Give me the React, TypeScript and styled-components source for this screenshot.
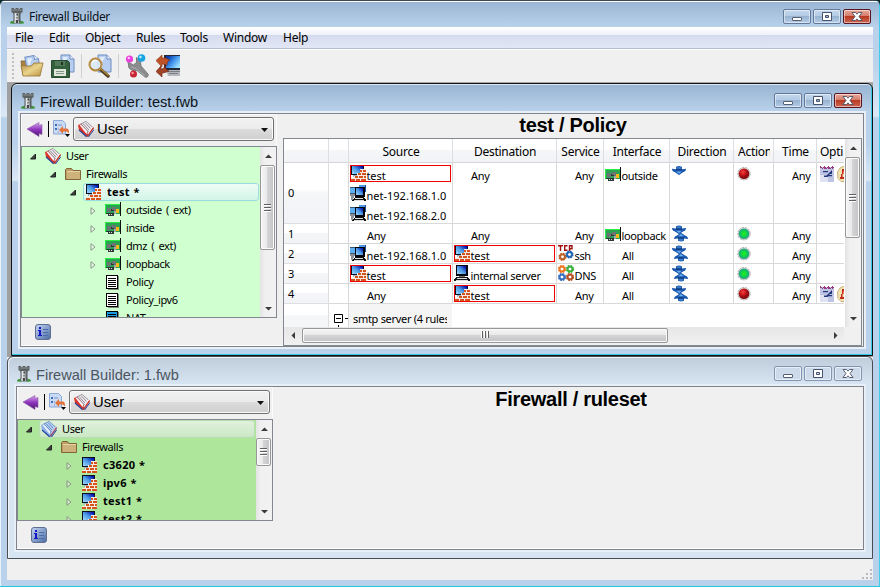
import React from "react";
import styled, { createGlobalStyle, css } from "styled-components";

const ui = '"Noto Sans", "Open Sans", sans-serif';
const arial = '"Liberation Sans", Arial, sans-serif';

const Global = createGlobalStyle`
  * { box-sizing: border-box; }
  html, body { margin: 0; padding: 0; overflow: hidden; background: #0d2c2e; }
  svg { display: block; flex: none; }
`;

/* ---------- icons ---------- */

const Svg = ({ w = 16, h = w, vb = `0 0 ${w} ${h}`, crisp = false, children }: {
  w?: number; h?: number; vb?: string; crisp?: boolean; children: React.ReactNode;
}) => <svg width={w} height={h} viewBox={vb} shapeRendering={crisp ? "crispEdges" : undefined}>{children}</svg>;

const Tower = () => (
  <Svg w={14} h={16}>
    <path d="M1.500 0h2.500v1h1.500V0h3v1H10V0h2.500v4.500h-1L10.500 6v6l1.500 3.500H2L3.500 12V6l-1-1.500h-1z" fill="#5b6063" />
    <path d="M2.500 1.500h9v1h-9z" fill="#8e9395" />
    <path d="M4.500 5h4v7l.5 3H3.500l1-3z" fill="#c3c7c8" /><path d="M5 5h1.500v7H5z" fill="#e6e8e8" />
    <path d="M6.500 5.500h1.500v2H6.500zM6.500 9h1v1.500h-1z" fill="#3c4042" />
    <path d="M6 12h2v3H6z" fill="#44484a" />
    <path d="M0 15.500c0-3.500 4-3.500 4.500 0zM9.500 15.500c.5-3.500 4.500-3.500 4.500 0z" fill="#3a9334" />
  </Svg>
);

const Doc = () => (
  <g>
    <path d="M2 1h9l4 4v13H2z" fill="#b7cef0" stroke="#6f8dc0" />
    <path d="M11 1v4h4" fill="#f2f7ff" stroke="#6f8dc0" />
    <path d="M4 3h5L4 12z" fill="#e3edfb" />
  </g>
);

const OpenIcon = () => (
  <Svg w={24}>
    <defs><linearGradient id="fol" x2="1" y2="1"><stop stopColor="#b08a42" /><stop offset=".5" stopColor="#ead48c" /><stop offset="1" stopColor="#b8903f" /></linearGradient></defs>
    <path d="M1 7h6l2 2h5v12H3z" fill="#a98140" stroke="#8f6e35" />
    <g transform="translate(4 1) rotate(-10 8 8)"><Doc /></g>
    <path d="M1 11l2 11h17l3-13h-9l-3 3H6z" fill="url(#fol)" stroke="#977532" strokeWidth=".8" />
  </Svg>
);
const SaveIcon = () => (
  <Svg w={24}>
    <g transform="translate(8 0)"><Doc /></g>
    <path d="M.5 6.500h16l2 2v15H.5z" fill="#35603e" stroke="#284b31" />
    <path d="M4 7h10v5H4z" fill="#53785a" /><path d="M10 8h2v3h-2z" fill="#1c3421" />
    <path d="M3 15h12v7H3z" fill="#dfe6dc" /><path d="M5 17.500h8M5 19.500h8" stroke="#869a86" />
  </Svg>
);
const FindIcon = () => (
  <Svg w={24}>
    <g transform="translate(8 0)"><Doc /></g>
    <path d="M12 15l8 7" stroke="#554022" strokeWidth="3.500" strokeLinecap="round" />
    <path d="M12.500 14.500l8 7" stroke="#b28a3f" strokeWidth="1.200" />
    <circle cx="7.500" cy="10.500" r="6" fill="#dce9f7" fillOpacity=".9" stroke="#a67a32" strokeWidth="1.800" />
    <circle cx="7.500" cy="10.500" r="6.600" fill="none" stroke="#d9b56b" strokeWidth=".7" />
    <path d="M4 9c1-3 4-3 5-2" stroke="#fff" fill="none" strokeWidth="1.300" />
  </Svg>
);
const WrenchIcon = () => (
  <Svg w={24}>
    <path d="M3 8l1 6 4 3 4-.5 8 6.500c2 1 4-1 3-3l-7-8-.5-5-4-3.500 0 5-3 2.500z" fill="#8a8c8d" stroke="#7a7c7e" />
    <path d="M6 13l4 1 10 8" stroke="#b5b7b8" fill="none" strokeWidth=".8" />
    <circle cx="4.500" cy="5" r="3.600" fill="#e93ddd" /><circle cx="3.800" cy="4" r="1.200" fill="#ffc8fb" />
    <circle cx="16.500" cy="4" r="3.800" fill="#18a4e3" /><circle cx="15.500" cy="3" r="1.300" fill="#b6edff" />
    <circle cx="8.500" cy="20" r="3.500" fill="#c62634" /><circle cx="7.600" cy="19" r="1.200" fill="#ff9aa0" />
  </Svg>
);
const InstallIcon = () => (
  <Svg w={24}>
    <defs><linearGradient id="lap" x2="1" y2=".7"><stop offset=".15" stopColor="#0a3cae" /><stop offset=".55" stopColor="#3f92ea" /><stop offset="1" stopColor="#9fe2ff" /></linearGradient></defs>
    <path d="M8 1h16v15H8z" fill="#20283a" /><path d="M10 2h14v12H10z" fill="url(#lap)" />
    <path d="M10 16h14v6H12z" fill="#b4b8bd" /><path d="M12 17.500h12M13 19.500h9" stroke="#7a7f85" />
    <path d="M0 6.500L6 1v3h3c2 0 3 2 5 2-2 1-3 2-3 5-2 0-3-1-5-1v3z" fill="#bd5226" stroke="#8a3416" strokeWidth=".6" />
    <path d="M0 17.500L5 12v3c2 0 3-1 4-3 1 2 1 4 4 5-3 1-4 2-7 2v4z" fill="#a14325" stroke="#6a2111" strokeWidth=".6" />
  </Svg>
);
const BackIcon = () => (
  <Svg w={16} h={15}>
    <defs><linearGradient id="bk" x2="0" y2="1"><stop stopColor="#d9a5ef" /><stop offset=".5" stopColor="#8f35bd" /><stop offset="1" stopColor="#4b1471" /></linearGradient></defs>
    <path d="M0 7L12 .5v3l3-1v10l-3-1v3z" fill="url(#bk)" stroke="#8c5da8" strokeWidth=".6" />
  </Svg>
);
const NewObjIcon = () => (
  <Svg w={18}>
    <path d="M.5 .5h9l3 3V14H.5z" fill="#c8daf5" stroke="#8ba8d6" />
    <path d="M2 4h2v2H2zM2 8h2v2H2z" fill="#3f6ab4" /><path d="M5 5h4M5 9h1M5 12h1" stroke="#7a93bd" />
    <path d="M6 10l4-4v2.500h3c3 0 3 2 3 5-2-2.500-3-2-6-2v2.500z" fill="#e2733a" />
    <path d="M12 14h5l-2.500 3z" fill="#000" />
  </Svg>
);
const Book = ({ blue = false }: { blue?: boolean }) => (
  <Svg w={16}>
    <path d="M2 3l6-3 8 7-6 9-2 0-7-7z" fill={blue ? "#4b74b4" : "#7d7684"} />
    <path d="M3.500 3L8 .5 15 7l-4.500 3.500z" fill={blue ? "#bdd6f8" : "#eeeaee"} />
    <path d="M5 2.500l6 6.500M7 1.500l5.500 6" stroke={blue ? "#5e86bf" : "#968c95"} />
    <path d="M0 4l3-1 6.500 8v5L1 9z" fill={blue ? "#8fb1e6" : "#d8342a"} />
    <path d="M1.500 4L3 3.500l6.500 7-1 2.500z" fill={blue ? "#eaf2fd" : "#fdf6f8"} />
    <path d="M1 9l7.500 6.500" fill="none" stroke="#2c49a0" strokeWidth="1.200" />
    <path d="M10 13l5-7" stroke={blue ? "#ddd0e4" : "#fff"} strokeWidth="1.500" />
    <path d="M9.500 15l6-8.500" stroke={blue ? "#a0506b" : "#cf3226"} strokeWidth="1.300" />
    <path d="M10.500 16L16 8.500" stroke="#2c49a0" strokeWidth="1" />
  </Svg>
);
const Folder = () => (
  <Svg w={16}>
    <path d="M.5 13.500v-10l1-1h5l1.500 2h7.500v9z" fill="#bd9c62" stroke="#826639" />
    <path d="M2 6h13v7H2z" fill="#cdb27c" /><path d="M2 5.500h13" stroke="#e6d3a6" />
  </Svg>
);
const Screen = ({ id }: { id: string }) => (
  <defs><linearGradient id={id} x1="0" y1="1" x2="1" y2="0"><stop stopColor="#9fd9ff" /><stop offset=".5" stopColor="#4a98e4" /><stop offset=".9" stopColor="#0715b0" /></linearGradient></defs>
);
const Fw = () => (
  <Svg w={16} crisp>
    <Screen id="scr" />
    <path d="M1 0h13v10H1z" fill="#0a1020" /><path d="M2 1h11v8H2z" fill="url(#scr)" />
    <path d="M3 10h5v2H3z" fill="#9fb2bd" />
    <path d="M10 4h6v12H1v-3h3v-2h3V8h3z" fill="#f6ebe4" />
    <path d="M10 5h2v2h-2zM13 5h3v2h-3zM8 8h3v2H8zM12 8h4v2h-4zM5 11h3v2H5zM9 11h4v2H9zM14 11h2v2h-2zM1 14h4v2H1zM6 14h4v2H6zM11 14h5v2h-5z" fill="#d4541c" />
  </Svg>
);
const Nic = () => (
  <Svg w={16} crisp>
    <path d="M0 2h15v10H0z" fill="#2aa252" /><path d="M0 2h15v1H1v9H0z" fill="#29ed41" />
    <path d="M2 6h4v4H2zM7 5h4v4H7z" fill="#6c7475" /><path d="M3 9h6V8H7V7H6v2zM1 11h8v1H1z" fill="#293735" />
    <path d="M3 12h6v2H3z" fill="#323a38" /><path d="M4 12h1v1H4zM6 12h1v1H6z" fill="#d1d8d3" />
    <path d="M11 7h3v4h-3z" fill="#f7ba16" /><path d="M9 9h2v3H9z" fill="#a4a6a5" />
    <path d="M15 0h1v14h-1z" fill="#111" />
  </Svg>
);
const Host = () => (
  <Svg w={16} crisp>
    <Screen id="scr2" />
    <path d="M2 0h12v11H2z" fill="#02040c" /><path d="M3 1h9v8H3z" fill="url(#scr2)" />
    <path d="M5 11h6v1H5z" fill="#777" /><path d="M2 12h12l2 3v1H0v-1z" fill="#14171c" />
    <path d="M3 13h10v1H3zM2 15h12v1H2z" fill="#e0e0de" />
  </Svg>
);
const Net = () => (
  <Svg w={16} crisp>
    <Screen id="scr3" />
    <path d="M9 0h7v7H9z" fill="#1d4f9c" /><path d="M9 0h6v5H9z" fill="#4b9be6" />
    <path d="M0 2h7v8H0z" fill="#3d566f" /><path d="M0 3h6v5H0z" fill="#5fb0ee" />
    <path d="M0 9h5v2H4v2H3v2H1v-3z" fill="#8b9298" />
    <path d="M5 2h10v10H5z" fill="#02040c" /><path d="M6 3h7v7H6z" fill="url(#scr3)" />
    <path d="M5 12h9l2 3v1H2v-1z" fill="#111" /><path d="M5 13h8v1H5zM4 15h10v1H4z" fill="#e0e0de" />
  </Svg>
);
const Rules = ({ nat = false }: { nat?: boolean }) => (
  <Svg w={14} h={15} crisp>
    <path d="M2 1h11v14H2z" fill="#7d8d7b" />
    <path d="M0 0h12v14H0z" fill="#000" /><path d="M1 1h10v12H1z" fill={nat ? "#1b9ce0" : "#fff"} />
    <path d="M2 3h8v1H2zM2 5h8v1H2zM2 7h8v1H2zM2 9h8v1H2zM2 11h8v1H2z" fill="#000" />
  </Svg>
);
const Info = () => (
  <Svg w={16}>
    <defs><linearGradient id="inf" x2="1" y2="1"><stop stopColor="#c5d6f2" /><stop offset="1" stopColor="#4a69a3" /></linearGradient></defs>
    <rect x=".5" y=".5" width="15" height="15" rx="2.500" fill="url(#inf)" stroke="#5e6f91" />
    <path d="M4 3h2v2H4zM3 6h3v5h1v1H3v-1h1V7H3z" fill="#1515c5" />
    <path d="M8 5.500h5M8 8.500h5M8 11.500h5" stroke="#4b6cab" />
  </Svg>
);
const ArrowDown = () => (
  <g>
    <path d="M4 1.200Q7-.4 10 1.200V3.500L14 3q0 2.500-3 3.500L7 9.300 3 6.500Q0 5.500 0 3l4 .5z" fill="#1a58ae" />
    <path d="M4.800 1.500Q7 .7 9.200 1.500V3H4.800z" fill="#3e7bc9" />
    <path d="M4 3.300q3 .8 6 0v1.100q-3 .8-6 0z" fill="#123a7a" />
    <path d="M4.300 5.800h5.400L7 8z" fill="#6fb0f4" />
  </g>
);
const Dir = ({ both = false }: { both?: boolean }) => (
  <Svg w={16} h={17}>
    <g transform={both ? undefined : "translate(0 .7)"}><ArrowDown /></g>
    {both && <g transform="translate(2 17) scale(1 -1)"><ArrowDown /></g>}
  </Svg>
);
const Light = ({ ok }: { ok: boolean }) => (
  <Svg w={14} h={15}>
    <defs>
      <radialGradient id="lg"><stop stopColor="#20ef24" /><stop offset=".45" stopColor="#12da3c" /><stop offset="1" stopColor="#1aa290" /></radialGradient>
      <radialGradient id="lr" cx=".4" cy=".35"><stop stopColor="#f04444" /><stop offset=".5" stopColor="#cf1a1e" /><stop offset="1" stopColor="#8a0a0e" /></radialGradient>
    </defs>
    <circle cx="7" cy="7.700" r="6.300" fill="#d9d4d2" stroke="#a5a5a5" strokeWidth=".8" strokeDasharray="2 1" />
    <circle cx="7" cy="7.700" r="5.300" fill={ok ? "url(#lg)" : "url(#lr)"} />
  </Svg>
);
const LogIcon = () => (
  <Svg w={14} h={16}>
    <path d="M0 1h14v15H0z" fill="#bfc4e4" /><path d="M0 9h8v7H0z" fill="#dfe2f2" />
    <path d="M0 0h1v1h1v1h1V1h1V0h1v1h1v1h1V1h1V0h1v1h1v1h1V1h1V0h1v1h1v1h-1v1h-1V2h-1v1H8V2H7v1H4V2H3v1H2V2H0z" fill="#9a3a80" />
    <path d="M3 5h5v1.300H3zM4 9.500h2.500L12 4v4h-2l-1 1h3v1.300H8.500L7.500 11H4z" fill="#23387d" />
  </Svg>
);
const OptIcon = () => (
  <Svg w={8} h={16}>
    <path d="M3 2l3-1.500h2V15.500H4l-3-3L.5 6z" fill="#f1e2b4" stroke="#cdb27a" />
    <path d="M5 3h3v2.500H6.500V8H5.500v3H8v2H3v-2h1V8h1z" fill="#c72b1b" />
  </Svg>
);
const Gear = ({ x, y, c }: { x: number; y: number; c: string }) => (
  <g transform={`translate(${x} ${y})`}>
    <circle r="3.300" fill="none" stroke={c} strokeWidth="1.600" strokeDasharray="1.600 1" />
    <circle r="2.400" fill="#fff" stroke={c} strokeWidth="1.900" />
  </g>
);
const Ssh = () => (
  <Svg w={16}>
    <path d="M0 .7h5M2.500 0v6M9.500 .7H6.700v4.600h2.800M11.500 6V.7H14v3h-2.500" stroke="#a01010" strokeWidth="1.400" fill="none" />
    <Gear x={4.500} y={11.800} c="#be5f24" /><Gear x={11.500} y={9.500} c="#2368b4" />
  </Svg>
);
const Dns = () => (
  <Svg w={16}>
    <Gear x={4} y={4} c="#ed751b" /><Gear x={12} y={4} c="#35ae3a" />
    <Gear x={4} y={12} c="#356ebd" /><Gear x={12} y={12} c="#b34f25" />
  </Svg>
);

/* ---------- window chrome ---------- */

const Main = styled.div`
  position: relative; display: flex; flex-direction: column;
  width: 880px; height: 587px; padding: 0 7px 7px;
  border-radius: 6px 6px 0 0; overflow: hidden;
  font-family: ${ui}; color: #000;
  background:
    linear-gradient(#fff, #fff) 0 1px / 100% 1px no-repeat,
    linear-gradient(#27c7de, #27c7de) 0 100% / 100% 1px no-repeat,
    linear-gradient(#3ecdea, #3ecdea) 100% 0 / 1px 100% no-repeat,
    linear-gradient(#e8f3fc, #e8f3fc) 0 0 / 1px 100% no-repeat,
    linear-gradient(#3b4b55, #3b4b55) 0 0 / 100% 1px no-repeat,
    linear-gradient(#98b4d2, #b9d1ea 27px, #b9d1ea 60px, #dbe8f6 116px, #b9d1ea 118px);
`;

const TitleBar = styled.div<{ $child?: boolean }>`
  display: flex; align-items: center; flex: none; height: 27px;
  padding: ${p => (p.$child ? "6px 4px 0 3px" : "5px 2px 0 3px")};
`;
const Title = styled.div<{ $child?: boolean; $dim?: boolean }>`
  flex: 1; white-space: nowrap;
  font-family: ${p => (p.$child ? arial : ui)};
  font-size: ${p => (p.$child ? 14.6 : 12)}px;
  letter-spacing: ${p => (p.$child ? 0 : -0.35)}px;
  padding-left: 5px;
  ${p => p.$child && css`padding-top: 2px;`}
  color: ${p => (p.$dim ? "#4b5661" : "#0b1420")};
`;
const Controls = styled.div`display: flex; gap: 2px;`;
const Control = styled.div<{ $close?: boolean; $dim?: boolean }>`
  width: 28px; height: 15px; border: 1px solid #64799a; border-radius: 2px;
  display: flex; align-items: center; justify-content: center;
  box-shadow: inset 0 0 0 1px rgba(255,255,255,.5);
  background: ${p => p.$close
    ? "linear-gradient(#e9a99c, #d57d6d 45%, #ba3a22 50%, #ca6651)"
    : p.$dim ? "#ccdae9" : "linear-gradient(#c4d8ed, #b3cbe4 45%, #98b4d2 50%, #b4cde7)"};
  ${p => p.$close && css`border-color: #571421;`}
  ${p => p.$dim && css`border-color: #8296b1;`}
`;

const WinButtons = ({ dim = false }: { dim?: boolean }) => (
  <Controls>
    <Control $dim={dim}>
      <Svg w={12} h={11}><rect x="1.500" y="6.500" width="9" height="3" rx=".5" fill="#fff" stroke="#555f70" /></Svg>
    </Control>
    <Control $dim={dim}>
      <Svg w={12} h={11}><path d="M1.500 1.500h9v8h-9zM4.500 4.500v2h3v-2z" fill="#fff" fillRule="evenodd" stroke="#46536a" /></Svg>
    </Control>
    <Control $dim={dim} $close={!dim}>
      <Svg w={12} h={11}>
        <path d="M1 1.500h3.500L6 3.200l1.500-1.700H11L8 5.500l3 4H7.500L6 7.800 4.500 9.500H1L4 5.500z" fill="#fff" stroke="#4c5264" strokeWidth=".9" />
      </Svg>
    </Control>
  </Controls>
);

const MenuBar = styled.div`
  display: flex; align-items: center; flex: none; height: 23px; padding: 0 8px 1px;
  border-bottom: 1px solid #fff;
  background: linear-gradient(#fff, #eff1f9 8px, #d5dbee 8px, #e2e7f6 21px, #b6bccc 21px, #b6bccc 22px);
`;
const MenuItem = styled.div<{ $w: number }>`
  width: ${p => p.$w}px; font-size: 12px; letter-spacing: -0.25px; white-space: nowrap;
`;

const ToolBar = styled.div`
  display: flex; align-items: center; flex: none; height: 33px; padding-left: 5px;
  background: #f0f0f0; border-bottom: 1px solid #a9a9a9;
`;
const Grip = styled.div`
  width: 2px; height: 26px; margin-right: 6px;
  background: repeating-linear-gradient(#c0c0c0 0 2px, transparent 2px 4px);
`;
const Tool = styled.div`width: 24px; height: 24px; margin-right: 7px;`;
const ToolSep = styled.div`width: 1px; height: 24px; background: #d0d0d0; margin: 0 6px 0 -1px;`;

const Mdi = styled.div`position: relative; flex: 1; background: #f0f0f0;
  background-image: linear-gradient(#a0a0a0, #a0a0a0); background-size: 100% 274px; background-repeat: no-repeat;`;

const Window = styled.div<{ $active?: boolean }>`
  position: absolute; display: flex; flex-direction: column;
  left: ${p => (p.$active ? 4 : 0)}px; top: ${p => (p.$active ? 0 : 273)}px;
  width: ${p => (p.$active ? 862 : 866)}px; height: ${p => (p.$active ? 273 : 203)}px;
  padding: 0 6px 6px;
  border: 1px solid ${p => (p.$active ? "#101418" : "#4a4d52")};
  border-radius: 6px 6px 0 0;
  background: ${p => p.$active
    ? "linear-gradient(#98b4d2, #b9d1ea 27px, #b9d1ea 60px, #dbe8f6 96px, #b9d1ea 98px)"
    : "linear-gradient(#bfccda, #d7e4f2 27px)"};
  box-shadow: ${p => p.$active ? "inset -1px -1px 0 #35cbe6, inset 0 1px 0 #dbe8f5" : "inset 1px 1px 0 #eef4fa"};
`;
const Client = styled.div`
  flex: 1; min-height: 0; display: flex; background: #f0f0f0; padding: 1px;
  border: 1px solid #e9eff7;
  background-clip: content-box;
  box-shadow: inset 0 0 0 1px #e9eff7;
`;
const Body = styled.div`
  flex: 1; min-width: 0; display: flex; border: 1px solid #7f848c; background: #f0f0f0;
  box-shadow: inset 0 -1px 0 #fff;
`;

/* ---------- left pane ---------- */

const Side = styled.div`width: 256px; flex: none; display: flex; flex-direction: column;`;
const SideTools = styled.div`
  height: 32px; flex: none; display: flex; align-items: center; padding: 0 2px 3px 5px;
  border: 1px solid #fbfbfb; border-bottom: 0;
`;
const Bar = styled.div`width: 1px; height: 16px; background: #000; margin: 0 4px 0 5px;`;
const Combo = styled.div`
  flex: 1; margin-left: 2px; height: 24px; display: flex; align-items: center; padding: 0 4px 0 4px;
  border: 1px solid #707070; border-radius: 3px; box-shadow: inset 0 0 0 1px #fbfbfb;
  background: linear-gradient(#f2f2f2, #ebebeb 48%, #dcdcdc 50%, #cfcfcf);
  font-family: ${arial};
  span { flex: 1; padding-left: 3px; font-size: 14.800px; margin-top: -1px; }
`;
const ComboArrow = styled.div`padding-top: 3px;`;
const TreeBox = styled.div<{ $h: number; $bg: string }>`
  height: ${p => p.$h}px; flex: none; display: flex; overflow: hidden;
  border: 1px solid #828790; background: ${p => p.$bg};
`;
const TreeList = styled.div`flex: 1; min-width: 0; overflow: hidden;`;
const TreeRow = styled.div<{ $level: number }>`
  height: 18px; display: flex; align-items: center; padding-left: ${p => 8 + p.$level * 20}px;
`;
const Toggle = styled.div`width: 13px; flex: none; padding-top: 1px;`;
const Item = styled.div<{ $sel?: "hot" | "dim"; $bold?: boolean }>`
  flex: 1; height: 18px; display: flex; align-items: center; gap: 5px; padding-left: 1px;
  border: 1px solid transparent; border-radius: 3px; margin-right: 1px; white-space: nowrap;
  font-size: 11px; letter-spacing: ${p => (p.$bold ? 0.3 : -0.4)}px; font-weight: ${p => (p.$bold ? 700 : 400)};
  word-spacing: ${p => (p.$bold ? 0.5 : 1.8)}px;
  > svg { width: 16px; }
  > span { margin-top: -2px; padding-left: ${p => (p.$bold ? 1 : 0)}px; }
  ${p => p.$sel === "hot" && css`border-color: #9bdcdf; background: linear-gradient(#eefdf6, #d3f5e8);`}
  ${p => p.$sel === "dim" && css`border-color: #b9dbb4; background: linear-gradient(#e0f1dc, #cbe8c5);`}
`;
const Foot = styled.div`flex: 1; padding: 6px 0 0 14px;`;

const VScroll = styled.div`
  width: 16px; flex: none; display: flex; flex-direction: column; align-items: center;
  background: linear-gradient(90deg, #e3e3e3, #f0f0f0 30%, #f2f2f2);
`;
const ArrowBox = styled.div<{ $side?: boolean }>`
  width: ${p => (p.$side ? 18 : 16)}px; height: ${p => (p.$side ? 15 : 18)}px; flex: none;
  display: flex; align-items: center; justify-content: center;
`;
const Thumb = styled.div<{ $len: number; $h?: boolean }>`
  flex: none; display: flex; align-items: center; justify-content: center;
  width: ${p => (p.$h ? p.$len : 15)}px; height: ${p => (p.$h ? 15 : p.$len)}px;
  border: 1px solid #979797; border-radius: 2px; box-shadow: inset 0 0 0 1px #fafafa;
  background: linear-gradient(${p => (p.$h ? "180deg" : "90deg")}, #f5f5f5, #e9e9eb 48%, #d4d4d6 50%, #c3c3c6);
  ${p => !p.$h && css`align-self: flex-start;`}
`;
const Fill = styled.div`flex: 1;`;

const Arrow = ({ r }: { r: number }) => (
  <Svg w={7} h={7}><path d="M0 5L3.500 1.500 7 5z" fill="#3a3a3a" transform={`rotate(${r} 3.5 3.5)`} /></Svg>
);
const Ridges = ({ h = false }: { h?: boolean }) => (
  <Svg w={8} h={8}>
    <g transform={h ? "rotate(90 4 4)" : undefined}>
      <path d="M0 .5h7M0 3.500h7M0 6.500h7" stroke="#5f5f62" /><path d="M0 1.500h7M0 4.500h7M0 7.500h7" stroke="#fff" />
    </g>
  </Svg>
);
const Scroll = ({ len }: { len: number }) => (
  <VScroll>
    <ArrowBox><Arrow r={0} /></ArrowBox><Thumb $len={len}><Ridges /></Thumb><Fill /><ArrowBox><Arrow r={180} /></ArrowBox>
  </VScroll>
);

type Node = { level: number; text: string; icon: React.ReactNode; open?: boolean; closed?: boolean; bold?: boolean; sel?: "hot" | "dim" };

const Tree = ({ nodes, h, bg, len }: { nodes: Node[]; h: number; bg: string; len: number }) => (
  <TreeBox $h={h} $bg={bg}>
    <TreeList>
      {nodes.map(n => (
        <TreeRow key={n.text} $level={n.level}>
          <Toggle>
            {n.open && <Svg w={8} h={8}><path d="M.5 6L5.500 1v5z" fill="#404040" stroke="#222" /></Svg>}
            {n.closed && <Svg w={8} h={8}><path d="M1 .7l4 3.300L1 7.300z" fill="#fff" fillOpacity=".4" stroke="#8b938b" /></Svg>}
          </Toggle>
          <Item $sel={n.sel} $bold={n.bold}>{n.icon}<span>{n.text}</span></Item>
        </TreeRow>
      ))}
    </TreeList>
    <Scroll len={len} />
  </TreeBox>
);

const SidePane = (tree: { nodes: Node[]; h: number; bg: string; len: number }) => (
  <Side>
    <SideTools>
      <BackIcon /><Bar /><NewObjIcon />
      <Combo>
        <Book /><span>User</span>
        <ComboArrow><Svg w={9} h={5}><path d="M1 0h7L4.500 4z" fill="#111" /></Svg></ComboArrow>
      </Combo>
    </SideTools>
    <Tree {...tree} />
    <Foot><Info /></Foot>
  </Side>
);

/* ---------- rule table ---------- */

const Right = styled.div`flex: 1; min-width: 0; margin-left: 6px; display: flex; flex-direction: column;`;
const Heading = styled.div<{ $top?: number }>`
  height: 24px; flex: none; text-align: center; white-space: nowrap;
  font: bold 20px/23px ${arial}; letter-spacing: -0.3px;
  padding-top: ${p => p.$top ?? 0}px;
`;
const TableBox = styled.div`
  width: 579px; height: 208px; display: flex; flex-direction: column; background: #fff;
  border: 1px solid #828790;
`;
const TableTop = styled.div`display: flex; height: 188px; flex: none;`;
const Grid = styled.div`width: 561px; padding-right: 1px; overflow: hidden;`;
const Row = styled.div<{ $h: number }>`
  display: grid; height: ${p => p.$h}px;
  grid-template-columns: 45px 20px 104px 104px 47px 66px 64px 40px 43px 27px;
`;
const Head = styled.div`
  border-right: 1px solid #dcdee2; border-bottom: 1px solid #d5d5d5; overflow: hidden;
  display: flex; align-items: center; justify-content: center; padding: 2px 0 0 1px;
  font-size: 12px; letter-spacing: -0.25px; white-space: nowrap;
  background: linear-gradient(#fff 45%, #f5f6f8 50%, #f2f3f6);
  &:last-child { border-right: 0; justify-content: flex-start; padding-left: 3px; }
`;
const HeadClip = styled.span`overflow: hidden; max-width: 32px;`;
const Num = styled.div`
  border-right: 1px solid #dcdee2; border-bottom: 1px solid #dcdee2; padding: 0 0 1px 4px;
  display: flex; align-items: center; font-size: 11px;
  background: linear-gradient(#fff 45%, #f5f6f8 50%, #f2f3f6);
`;
const Cell = styled.div<{ $tall?: boolean }>`
  border-right: 1px solid #d8d8d8; border-bottom: 1px solid #d8d8d8; overflow: hidden;
  padding: ${p => (p.$tall ? 2 : 1)}px 1px 0; display: flex; flex-direction: column;
  &:last-child { border-right: 0; }
`;
const Obj = styled.div<{ $red?: boolean; $drop?: boolean }>`
  height: 17px; margin-bottom: 3px; display: flex; align-items: flex-start; white-space: nowrap; flex: none;
  font-size: 11px; line-height: 15px;
  outline: ${p => (p.$red ? "1px solid #f00000" : "0")}; outline-offset: -1px;
  > svg { width: 16px; margin-top: ${p => (p.$drop ? 2 : 0)}px; }
`;
const ObjText = styled.span<{ $pad?: boolean; $ls?: number }>`
  padding-top: 3px; padding-left: ${p => (p.$pad ? 17 : 0.5)}px; letter-spacing: ${p => p.$ls ?? -0.35}px;
`;
const DirSlot = styled.div`padding-left: 1px;`;
const Marks = styled.div`display: flex; gap: 3px; padding: 1px 0 0 2px;`;
const Group = styled.div`display: flex; height: 24px; font-size: 11px;`;
const GroupNum = styled.div`width: 45px; border-right: 1px solid #dcdee2; background: linear-gradient(#fff 45%, #f5f6f8 50%);`;
const GroupToggle = styled.div`width: 20px; padding: 10px 0 0 5px; border-right: 1px solid #d8d8d8;`;
const GroupText = styled.div`
  width: 103px; padding: 6px 5px 0 4px; background: #f5f5f5;
  div { overflow: hidden; white-space: nowrap; line-height: 17px; letter-spacing: -0.3px; }
`;
const HScroll = styled.div`
  display: flex; align-items: center; width: 560px; height: 16px; background: linear-gradient(#e6e6e6, #f0f0f0);
`;
const Corner = styled.div`background: #f0f0f0; flex: 1; display: flex;`;

const Any = ({ t = "Any" }: { t?: string }) => <Obj><ObjText $pad>{t}</ObjText></Obj>;
const Entry = ({ icon, t, red, drop, ls }: { icon: React.ReactNode; t: string; red?: boolean; drop?: boolean; ls?: number }) => (
  <Obj $red={red} $drop={drop}>{icon}<ObjText $ls={ls}>{t}</ObjText></Obj>
);
const TestFw = () => <Entry red icon={<Fw />} t="test" ls={-0.1} />;
const NetObj = ({ t }: { t: string }) => <Entry icon={<Net />} t={t} ls={0} />;

type Rule = { src: React.ReactNode; dst: React.ReactNode; svc: React.ReactNode; itf: React.ReactNode; both: boolean; ok: boolean; opts?: boolean };
const rules: Rule[] = [
  { src: <><TestFw /><NetObj t="net-192.168.1.0" /><NetObj t="net-192.168.2.0" /></>,
    dst: <Any />, svc: <Any />, itf: <Entry drop icon={<Nic />} t="outside" />, both: false, ok: false, opts: true },
  { src: <Any />, dst: <Any />, svc: <Any />, itf: <Entry drop icon={<Nic />} t="loopback" />, both: true, ok: true },
  { src: <NetObj t="net-192.168.1.0" />, dst: <TestFw />, svc: <Entry icon={<Ssh />} t="ssh" />, itf: <Any t="All" />, both: true, ok: true },
  { src: <TestFw />, dst: <Entry icon={<Host />} t="internal server" />, svc: <Entry icon={<Dns />} t="DNS" />, itf: <Any t="All" />, both: true, ok: true },
  { src: <Any />, dst: <TestFw />, svc: <Any />, itf: <Any t="All" />, both: true, ok: false, opts: true },
];
const heads = ["", "", "Source", "Destination", "Service", "Interface", "Direction", "Action", "Time", "Opti"];

const RuleTable = () => (
  <TableBox>
    <TableTop>
      <Grid>
        <Row $h={24}>{heads.map((h, i) => <Head key={i}>{h === "Action" ? <HeadClip>{h}</HeadClip> : h}</Head>)}</Row>
        {rules.map((r, i) => {
          const tall = i === 0;
          return (
            <Row key={i} $h={tall ? 61 : 20}>
              <Num>{i}</Num><Cell />
              <Cell $tall={tall}>{r.src}</Cell>
              <Cell $tall={tall}>{r.dst}</Cell>
              <Cell $tall={tall}>{r.svc}</Cell>
              <Cell $tall={tall}>{r.itf}</Cell>
              <Cell $tall={tall}><DirSlot><Dir both={r.both} /></DirSlot></Cell>
              <Cell $tall={tall}><Marks><Light ok={r.ok} /></Marks></Cell>
              <Cell $tall={tall}><Any /></Cell>
              <Cell $tall={tall}>{r.opts && <Marks><LogIcon /><OptIcon /></Marks>}</Cell>
            </Row>
          );
        })}
        <Group>
          <GroupNum />
          <GroupToggle>
            <Svg w={14} h={14}><path d="M.5 .5h8v8h-8zM2 4.500h5M11 4.500h3M4.500 11v3" fill="none" stroke="#000" /></Svg>
          </GroupToggle>
          <GroupText><div>smtp server (4 rules)</div></GroupText>
        </Group>
      </Grid>
      <Scroll len={81} />
    </TableTop>
    <Corner>
      <HScroll>
        <ArrowBox $side><Arrow r={-90} /></ArrowBox><Thumb $h $len={366}><Ridges h /></Thumb><Fill /><ArrowBox $side><Arrow r={90} /></ArrowBox>
      </HScroll>
    </Corner>
  </TableBox>
);

/* ---------- page ---------- */

const StatusBar = styled.div`
  height: 21px; flex: none; background: #f0f0f0; display: flex; justify-content: flex-end; align-items: flex-end;
`;

const policyNodes: Node[] = [
  { level: 0, text: "User", icon: <Book />, open: true },
  { level: 1, text: "Firewalls", icon: <Folder />, open: true },
  { level: 2, text: "test *", icon: <Fw />, open: true, bold: true, sel: "hot" },
  { level: 3, text: "outside ( ext)", icon: <Nic />, closed: true },
  { level: 3, text: "inside", icon: <Nic />, closed: true },
  { level: 3, text: "dmz ( ext)", icon: <Nic />, closed: true },
  { level: 3, text: "loopback", icon: <Nic />, closed: true },
  { level: 3, text: "Policy", icon: <Rules /> },
  { level: 3, text: "Policy_ipv6", icon: <Rules /> },
  { level: 3, text: "NAT", icon: <Rules nat /> },
];
const secondNodes: Node[] = [
  { level: 0, text: "User", icon: <Book blue />, open: true, sel: "dim" },
  { level: 1, text: "Firewalls", icon: <Folder />, open: true },
  ...["c3620 *", "ipv6 *", "test1 *", "test2 *"].map(text => ({ level: 2, text, icon: <Fw />, closed: true, bold: true })),
];
const menus: [string, number][] = [["File", 34], ["Edit", 36], ["Object", 51], ["Rules", 44], ["Tools", 43], ["Window", 60], ["Help", 40]];

export default function App() {
  return (
    <>
      <Global />
      <Main>
        <TitleBar><Tower /><Title>Firewall Builder</Title><WinButtons /></TitleBar>
        <MenuBar>{menus.map(([m, w]) => <MenuItem key={m} $w={w}>{m}</MenuItem>)}</MenuBar>
        <ToolBar>
          <Grip />
          <Tool><OpenIcon /></Tool><Tool><SaveIcon /></Tool><ToolSep />
          <Tool><FindIcon /></Tool><ToolSep />
          <Tool><WrenchIcon /></Tool><Tool><InstallIcon /></Tool>
        </ToolBar>
        <Mdi>
          <Window $active>
            <TitleBar $child><Tower /><Title $child>Firewall Builder: test.fwb</Title><WinButtons /></TitleBar>
            <Client><Body>
              <SidePane nodes={policyNodes} h={172} bg="#d0ffd0" len={85} />
              <Right><Heading>test / Policy</Heading><RuleTable /></Right>
            </Body></Client>
          </Window>
          <Window>
            <TitleBar $child><Tower /><Title $child $dim>Firewall Builder: 1.fwb</Title><WinButtons dim /></TitleBar>
            <Client><Body>
              <SidePane nodes={secondNodes} h={102} bg="#aee69c" len={28} />
              <Right><Heading $top={1}>Firewall / ruleset</Heading></Right>
            </Body></Client>
          </Window>
        </Mdi>
        <StatusBar>
          <Svg w={12} h={12}><path d="M9 9h2v2H9zM5 9h2v2H5zM9 5h2v2H9zM1 9h2v2H1zM5 5h2v2H5zM9 1h2v2H9z" fill="#b8bcc2" /></Svg>
        </StatusBar>
      </Main>
    </>
  );
}
